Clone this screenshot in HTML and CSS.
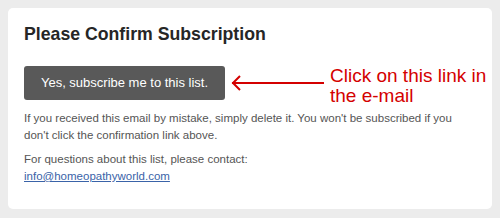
FILE: index.html
```html
<!DOCTYPE html>
<html lang="en">
<head>
  <meta charset="UTF-8">
  <title>Please Confirm Subscription</title>
  <link rel="stylesheet" href="styles.css">
</head>
<body>
<div class="card">
  <h1>Please Confirm Subscription</h1>

  <div class="action">
    <a href="javascript:;" class="btn">Yes, subscribe me to this list.</a>
    <!--annotation-->
    <svg class="arrow" width="99" height="16" viewBox="0 0 99 16">
      <path d="M1 8 H93" stroke="#d40000" stroke-width="2" fill="none"/>
      <path d="M9 1 L2 8 L9 15" stroke="#d40000" stroke-width="2" fill="none"/>
    </svg>
    <div class="note">Click on this link in<br>the e-mail</div>
  </div>

  <p>If you received this email by mistake, simply delete it. You won't be subscribed if you
    don't click the confirmation link above.</p>
  <p>For questions about this list, please contact:<br>
    <a href="javascript:;" class="mail">info@homeopathyworld.com</a></p>
</div>
</body>
</html>
```

FILE: styles.css
```css
* {
  margin: 0;
  padding: 0;
  box-sizing: border-box;
}

body {
  background: #ececec;
  padding: 8px;
  font-family: "Liberation Sans", Arial, sans-serif;
}

.card {
  background: #ffffff;
  border-radius: 5px;
  height: 201px;
  padding: 16px 16px 0;
}

.card h1 {
  font-size: 17.7px;
  color: #262626;
  line-height: 21px;
  margin-bottom: 21px;
}

.action {
  display: flex;
  align-items: flex-start;
  white-space: nowrap;
}

.btn {
  display: block;
  flex: none;
  width: 201px;
  height: 34px;
  line-height: 34px;
  text-align: center;
  background: #595959;
  border-radius: 3px;
  color: #ffffff;
  font-size: 13px;
  text-decoration: none;
}

.arrow {
  flex: none;
  margin-left: 6px;
  margin-top: 9px;
}

.note {
  color: #d40000;
  font-size: 19px;
  line-height: 20px;
}

.card p {
  font-size: 11.5px;
  line-height: 17px;
  color: #555555;
  margin-top: 4px;
}

.card p + p {
  margin-top: 7px;
}

.mail {
  color: #3a63a8;
}
```
